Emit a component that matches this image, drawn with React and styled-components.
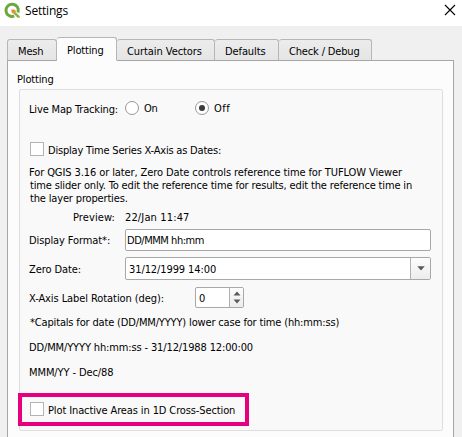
import React from 'react';
import styled, { createGlobalStyle } from 'styled-components';

const GlobalStyle = createGlobalStyle`
  *, *::before, *::after { box-sizing: border-box; }
  body { margin: 0; overflow: hidden; background: #f0f0f0; }
`;

const Dialog = styled.div`
  width: 462px;
  height: 437px;
  overflow: hidden;
  display: flex;
  flex-direction: column;
  background: #f0f0f0;
  color: #000;
  font: 11px/13px "DejaVu Sans Condensed", "DejaVu Sans", sans-serif;
`;

const TitleBar = styled.header`
  flex: none;
  display: flex;
  align-items: flex-start;
  height: 26px;
  padding: 2px 6px 0 4px;
  background: #fff;
`;

const Title = styled.h1`
  flex: 1;
  margin: 0 0 0 4px;
  font: 12px/17px "Open Sans", sans-serif;
  letter-spacing: -0.19px;
`;

const CloseButton = styled.button`
  display: flex;
  margin-top: 2px;
  padding: 0;
  border: 0;
  background: none;
`;

const TabBar = styled.nav`
  flex: none;
  display: flex;
  align-items: flex-end;
  height: 35px;
  margin-left: 7px;
`;

const Tab = styled.button`
  width: ${(p) => p.$width}px;
  height: ${(p) => (p.$active ? 24 : 22)}px;
  margin: 0;
  padding: ${(p) => (p.$active ? '6px' : '5px')} 0 0 ${(p) => p.$pad}px;
  display: flex;
  align-items: flex-start;
  position: relative;
  z-index: ${(p) => (p.$active ? 1 : 0)};
  border: 1px solid #b6b6b6;
  border-left-width: ${(p) => (p.$joined ? 0 : 1)}px;
  border-bottom-color: ${(p) => (p.$active ? '#fcfcfc' : '#a6a6a6')};
  border-radius: 3px 3px 0 0;
  background: ${(p) => (p.$active ? '#fcfcfc' : 'linear-gradient(#ececec, #e5e5e5)')};
  color: #000;
  font: inherit;
  letter-spacing: ${(p) => p.$track}px;
  white-space: nowrap;
`;

const Pane = styled.main`
  flex: 1;
  width: 447px;
  margin: -1px 0 0 7px;
  padding: 12px 10px 0 10px;
  border: 1px solid #a6a6a6;
  border-bottom: 0;
  background: #fcfcfc;
`;

const Text = styled.span`
  display: block;
  white-space: nowrap;
  letter-spacing: ${(p) => p.$track || 0}px;
  margin-top: ${(p) => p.$top || 0}px;
  margin-left: ${(p) => p.$left || 0}px;
`;

const GroupBox = styled.section`
  width: 424px;
  height: 342px;
  margin: 3px 0 0 1px;
  padding: 11px 11px 0 10px;
  border: 1px solid #dedede;
  border-radius: 2px;
  background: #f9f9f9;
`;

const Row = styled.div`
  display: flex;
  align-items: flex-start;
  height: ${(p) => p.$height}px;
  margin-top: ${(p) => p.$top || 0}px;
`;

const LabelCell = styled.div`
  flex: none;
  width: ${(p) => p.$width}px;
`;

const Choice = styled.label`
  display: flex;
  width: ${(p) => p.$width}px;
`;

const Radio = styled.span`
  flex: none;
  display: grid;
  place-items: center;
  width: 14px;
  height: 14px;
  border: 1px solid #989898;
  border-radius: 50%;
  background: #fff;
  &::after {
    content: '';
    width: 6px;
    height: 6px;
    border-radius: 50%;
    background: ${(p) => (p.$checked ? '#3a3a3a' : 'transparent')};
  }
`;

const CheckBox = styled.span`
  flex: none;
  width: 14px;
  height: 14px;
  border: 1px solid #b4b4b4;
  background: #fff;
`;

const Field = styled.div`
  display: flex;
  width: ${(p) => p.$width}px;
  height: ${(p) => p.$height}px;
  border: 1px solid #a8a8a8;
  border-radius: 2px;
  background: #fff;
  overflow: hidden;
`;

const Value = styled.div`
  flex: 1;
  padding: ${(p) => p.$padding};
  letter-spacing: ${(p) => p.$track || 0}px;
  white-space: nowrap;
`;

const Stepper = styled.div`
  display: flex;
  align-items: center;
  justify-content: center;
  width: ${(p) => p.$width}px;
  border-left: 1px solid #b0b0b0;
  background: linear-gradient(#fdfdfd, #ececec);
`;

const Paragraph = styled.div`
  margin-top: 10px;
`;

const Highlight = styled.div`
  display: flex;
  width: 231px;
  height: 33px;
  margin: 14px 0 0 -12px;
  padding: 5px 0 0 8px;
  border: 4px solid #e6007e;
`;

const Logo = () => (
  <svg width="17" height="17" viewBox="0 0 17 17">
    <path d="M14 10.4A6.2 6.2 0 1 0 10.2 14.2" fill="none" stroke="#6aa83e" strokeWidth="3" />
    <path d="M9.6 11.8l1.9-1.9 4.3 4.3v1.6h-2.2z" fill="#8cb53c" />
    <path d="M7.4 7.4h3l1.8 1.8-2.8 2.8-2-2z" fill="#ee8a3c" />
  </svg>
);

const CloseIcon = () => (
  <svg width="12" height="12" viewBox="0 0 12 12">
    <path d="M1 1L11 11M11 1L1 11" stroke="#000" strokeWidth="1.1" />
  </svg>
);

const DownArrow = () => (
  <svg width="8" height="5" viewBox="0 0 8 5">
    <path d="M0.3 0.3h7.4L4 4.6z" fill="#5a5a5a" />
  </svg>
);

const SpinArrows = () => (
  <svg width="8" height="13" viewBox="0 0 8 13">
    <path d="M0.5 4.5h7L4 0.5zM0.5 8.5h7L4 12.5z" fill="#5a5a5a" />
  </svg>
);

const tabs = [
  { label: 'Mesh', width: 50, pad: 10, track: -0.15 },
  { label: 'Plotting', width: 60, pad: 10, track: -0.16, active: true, joined: true },
  { label: 'Curtain Vectors', width: 98, pad: 10, track: -0.07, joined: true },
  { label: 'Defaults', width: 64, pad: 10, track: -0.1, joined: true },
  { label: 'Check / Debug', width: 93, pad: 10, track: -0.16, joined: true },
];

export default function App() {
  return (
    <Dialog>
      <GlobalStyle />
      <TitleBar>
        <Logo />
        <Title>Settings</Title>
        <CloseButton aria-label="Close"><CloseIcon /></CloseButton>
      </TitleBar>
      <TabBar>
        {tabs.map((t) => (
          <Tab key={t.label} $width={t.width} $pad={t.pad} $track={t.track} $active={t.active} $joined={t.joined}>
            {t.label}
          </Tab>
        ))}
      </TabBar>
      <Pane>
        <Text $track={-0.16} $left={-1}>Plotting</Text>
        <GroupBox>
          <Row $height={16}>
            <LabelCell $width={95}><Text $top={2} $left={-1} $track={-0.155}>Live Map Tracking:</Text></LabelCell>
            <Choice $width={70}><Radio /><Text $left={5} $top={1} $track={-0.2}>On</Text></Choice>
            <Choice $width={70}><Radio $checked /><Text $left={5} $top={1} $track={0.5}>Off</Text></Choice>
          </Row>
          <Row $height={14} $top={25}>
            <CheckBox />
            <Text $left={4} $top={2} $track={-0.2}>Display Time Series X-Axis as Dates:</Text>
          </Row>
          <Paragraph>
            <Text $left={-1} $track={-0.096}>For QGIS 3.16 or later, Zero Date controls reference time for TUFLOW Viewer</Text>
            <Text $track={-0.15}>time slider only. To edit the reference time for results, edit the reference time in</Text>
            <Text $track={-0.16}>the layer properties.</Text>
          </Paragraph>
          <Row $height={13} $top={6}>
            <LabelCell $width={95}><Text $left={43} $track={0.1}>Preview:</Text></LabelCell>
            <Text $track={0.14}>22/Jan 11:47</Text>
          </Row>
          <Row $height={22} $top={5}>
            <LabelCell $width={95}><Text $top={5} $left={-1} $track={-0.1}>Display Format*:</Text></LabelCell>
            <Field $width={306} $height={22}><Value $padding="4px 0 0 1px" $track={-0.46}>DD/MMM hh:mm</Value></Field>
          </Row>
          <Row $height={23} $top={6}>
            <LabelCell $width={95}><Text $top={6} $left={-1} $track={-0.09}>Zero Date:</Text></LabelCell>
            <Field $width={306} $height={23}>
              <Value $padding="5px 0 0 3px" $track={-0.1}>31/12/1999 14:00</Value>
              <Stepper $width={20}><DownArrow /></Stepper>
            </Field>
          </Row>
          <Row $height={21} $top={7}>
            <LabelCell $width={165}><Text $top={5} $left={-1} $track={-0.08}>X-Axis Label Rotation (deg):</Text></LabelCell>
            <Field $width={49} $height={21}>
              <Value $padding="4px 0 0 3px">0</Value>
              <Stepper $width={14}><SpinArrows /></Stepper>
            </Field>
          </Row>
          <Text $top={8} $track={-0.16}>*Capitals for date (DD/MM/YYYY) lower case for time (hh:mm:ss)</Text>
          <Text $top={12} $left={-1} $track={-0.137}>DD/MM/YYYY hh:mm:ss - 31/12/1988 12:00:00</Text>
          <Text $top={12} $left={-1} $track={-0.1}>MMM/YY - Dec/88</Text>
          <Highlight>
            <CheckBox />
            <Text $left={4} $top={2} $track={-0.12}>Plot Inactive Areas in 1D Cross-Section</Text>
          </Highlight>
        </GroupBox>
      </Pane>
    </Dialog>
  );
}
